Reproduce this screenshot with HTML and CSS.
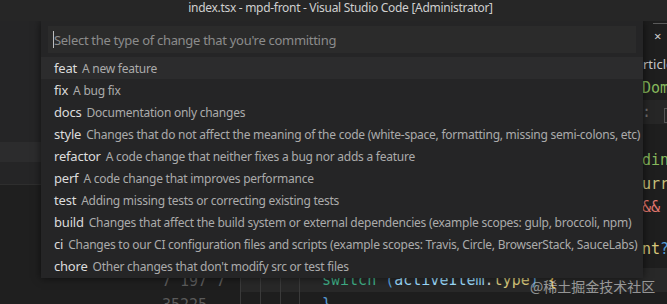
FILE: index.html
```
<!DOCTYPE html>
<html lang="en">
<head>
  <meta charset="UTF-8" />
  <title>index.tsx - mpd-front - Visual Studio Code [Administrator]</title>
  <link rel="stylesheet" href="styles.css">
</head>
<body>
  <div class="titlebar">index.tsx - mpd-front - Visual Studio Code [Administrator]</div>

  <div class="workbench">
    <div class="sidebar">
      <div class="side-top">
        <div class="side-row active"></div>
      </div>
    </div>

    <div class="editor">
      <div class="tabs">
        <div class="tab active"><span class="tab-close">×</span></div>
      </div>
      <div class="breadcrumb"><span class="crumb">rticle</span></div>
      <div class="body">
        <div class="gutter">
          <div class="ln current">7 197 7</div>
          <div class="ln">35225</div>
        </div>
        <div class="code">
          <div class="line"><span class="frag t-green">Dom</span></div>
          <div class="line band"><span class="frag t-dim">:&nbsp;<span class="boxed">图</span></span></div>
          <div class="line"></div>
          <div class="line"><span class="frag t-green">din</span></div>
          <div class="line short"><span class="frag t-olive">urr</span></div>
          <div class="line short"><span class="frag t-red">&amp;&amp;</span></div>
          <div class="line tall"></div>
          <div class="line short"><span class="frag t-yellow">nt<span class="t-blue">?</span></span></div>
          <div class="line gap"></div>
          <div class="line current">
            <span class="guide"></span><span class="guide"></span><span class="guide"></span><span class="guide"></span>
            <span class="stmt"><span class="t-teal">switch</span> <span class="t-blue">(</span><span class="t-light">activeItem</span>.<span class="t-yellow">type</span><span class="t-blue">)</span> <span class="t-gold">{</span></span>
          </div>
          <div class="line">
            <span class="guide"></span><span class="guide"></span><span class="guide"></span><span class="guide"></span>
            <span class="stmt"><span class="t-blue">}</span></span>
          </div>
        </div>
      </div>
    </div>

    <div class="quickpick">
      <div class="qp-input"><span class="caret"></span><span class="placeholder">Select the type of change that you're committing</span></div>
      <ul class="qp-list">
        <li class="qp-row focused"><span class="qp-label">feat</span><span class="qp-desc">A new feature</span></li>
        <li class="qp-row"><span class="qp-label">fix</span><span class="qp-desc">A bug fix</span></li>
        <li class="qp-row"><span class="qp-label">docs</span><span class="qp-desc">Documentation only changes</span></li>
        <li class="qp-row"><span class="qp-label">style</span><span class="qp-desc">Changes that do not affect the meaning of the code (white-space, formatting, missing semi-colons, etc)</span></li>
        <li class="qp-row"><span class="qp-label">refactor</span><span class="qp-desc">A code change that neither fixes a bug nor adds a feature</span></li>
        <li class="qp-row"><span class="qp-label">perf</span><span class="qp-desc">A code change that improves performance</span></li>
        <li class="qp-row"><span class="qp-label">test</span><span class="qp-desc">Adding missing tests or correcting existing tests</span></li>
        <li class="qp-row"><span class="qp-label">build</span><span class="qp-desc">Changes that affect the build system or external dependencies (example scopes: gulp, broccoli, npm)</span></li>
        <li class="qp-row"><span class="qp-label">ci</span><span class="qp-desc">Changes to our CI configuration files and scripts (example scopes: Travis, Circle, BrowserStack, SauceLabs)</span></li>
        <li class="qp-row"><span class="qp-label">chore</span><span class="qp-desc">Other changes that don't modify src or test files</span></li>
      </ul>
    </div>

    <div class="watermark">@稀土掘金技术社区</div>
  </div>
</body>
</html>
```

FILE: styles.css
```
* {
  box-sizing: border-box;
}

body {
  margin: 0;
  width: 667px;
  height: 304px;
  overflow: hidden;
  background: #1e1e1e;
  font-family: 'Noto Sans', 'Liberation Sans', sans-serif;
  color: #cccccc;
}

.titlebar {
  height: 21px;
  background: #262626;
  color: #cfcfcf;
  font-size: 12px;
  line-height: 15px;
  text-align: center;
  letter-spacing: -0.3px;
  padding-left: 14px;
}

.workbench {
  position: relative;
  display: flex;
  height: 283px;
  overflow: hidden;
}

/* left side panel */
.sidebar {
  width: 160px;
  flex: none;
  background: #1f1f1f;
}

.side-top {
  height: 164px;
  background: #252526;
  border-bottom: 1px solid #2e2e2e;
  padding-top: 121px;
}

.side-row {
  height: 20px;
}

.side-row.active {
  background: #2c2c2d;
}

/* editor */
.editor {
  flex: 1;
  display: flex;
  flex-direction: column;
  background: #1e1e1e;
}

.tabs {
  height: 34px;
  display: flex;
  justify-content: flex-end;
  background: #1e1e1e;
}

.tab.active {
  width: 24px;
  border-top: 1px solid #5a5a5a;
  margin-top: 2px;
  padding-left: 1px;
}

.tab-close {
  display: block;
  color: #cfcfcf;
  font-size: 13px;
  line-height: 24px;
}

.breadcrumb {
  height: 21px;
  font-size: 13px;
  line-height: 19px;
  color: #c8c8c8;
  padding-left: 483px;
  white-space: nowrap;
  overflow: hidden;
}

.body {
  flex: 1;
  display: flex;
  overflow: hidden;
  font-family: 'DejaVu Sans Mono', 'Liberation Mono', monospace;
  font-size: 15px;
}

.gutter {
  width: 80px;
  flex: none;
  padding-top: 192px;
  color: #5a5a5a;
  font-size: 15px;
}

.gutter .ln {
  height: 24px;
  line-height: 26px;
  padding-left: 2px;
  white-space: nowrap;
}

.code {
  flex: 1;
  overflow: hidden;
}

.line {
  position: relative;
  height: 24px;
  line-height: 24px;
  white-space: nowrap;
}

.line.short { height: 23px; }
.line.tall { height: 19px; }
.line.gap { height: 8px; }

.line.band { background: #262626; }
.line.current { background: #282828; }

.frag {
  display: block;
  padding-left: 402px;
}

.boxed {
  display: inline-block;
  width: 13px;
  height: 15px;
  margin-left: 4px;
  border: 1px solid #555;
  color: transparent;
  font-size: 10px;
  line-height: 13px;
  vertical-align: -2px;
}

.guide {
  float: left;
  width: 20px;
  height: 100%;
  border-left: 1px solid #3a3a3a;
}

.guide:nth-child(3) { width: 19px; }

.stmt {
  display: block;
  padding-left: 82px;
}

.t-green { color: #86b85c; }
.t-dim { color: #6e6e6e; }
.t-olive { color: #c9c07a; }
.t-red { color: #e0766e; }
.t-yellow { color: #d8c97c; }
.t-blue { color: #569cd6; }
.t-teal { color: #3fae86; }
.t-light { color: #9cdcfe; }
.t-gold { color: #e4c35a; }

/* quick pick widget */
.quickpick {
  position: absolute;
  left: 41px;
  top: 0;
  width: 602px;
  background: #252526;
  box-shadow: 0 0 8px rgba(0, 0, 0, 0.6);
  padding: 5px 0 1px;
}

.qp-input {
  display: flex;
  align-items: center;
  height: 27px;
  margin: 0 7px 4px;
  padding-left: 5px;
  background: #2b2b2b;
}

.caret {
  width: 1px;
  height: 17px;
  background: #bdbdbd;
}

.placeholder {
  color: #8c8c8c;
  font-size: 13px;
  letter-spacing: -0.3px;
}

.qp-list {
  list-style: none;
  margin: 0;
  padding: 0;
}

.qp-row {
  display: flex;
  align-items: baseline;
  height: 22px;
  line-height: 22px;
  padding-left: 13px;
  white-space: nowrap;
}

.qp-row.focused {
  background: #2c2c2d;
}

.qp-label {
  color: #dcdcdc;
  font-size: 13px;
  letter-spacing: -0.2px;
}

.qp-desc {
  margin-left: 5px;
  color: #ababab;
  font-size: 12px;
  letter-spacing: -0.25px;
}

.watermark {
  position: absolute;
  left: 530px;
  top: 254px;
  color: rgba(230, 230, 230, 0.6);
  font-family: 'Noto Sans CJK SC', sans-serif;
  font-size: 14px;
  line-height: 22px;
}
```
